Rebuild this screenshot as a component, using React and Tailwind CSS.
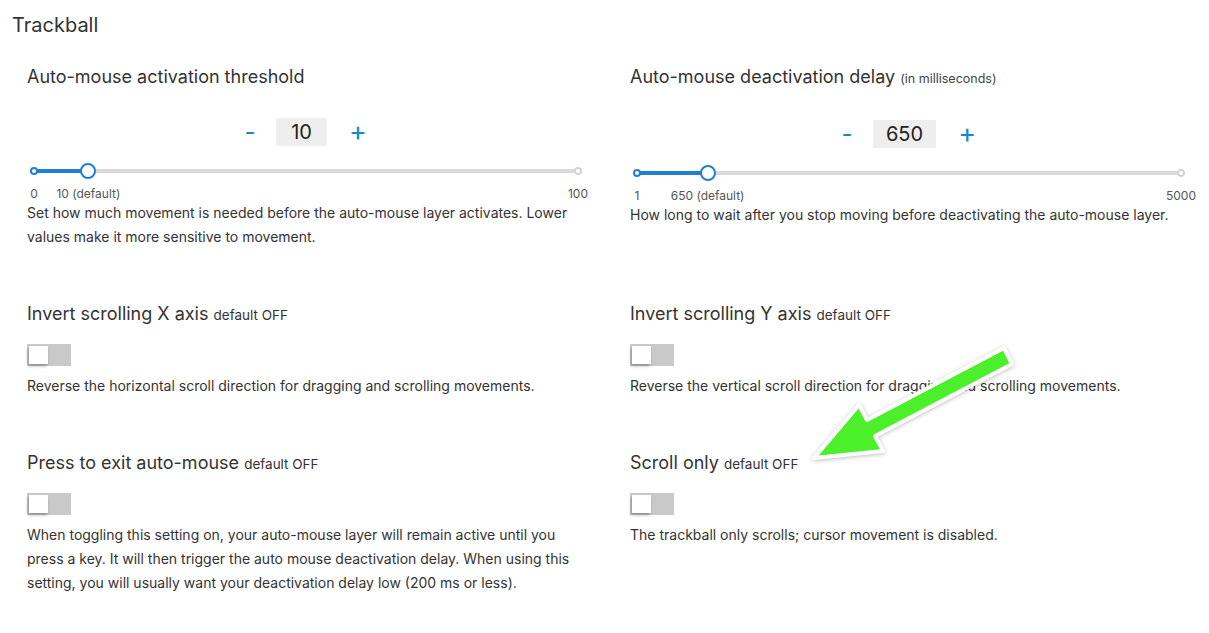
import React from 'react';

const font = { fontFamily: 'Inter, "Noto Sans", sans-serif' };

// slider with marks placed by value
const Slider = ({ min, max, value, def }) => {
  const pct = ((value - min) / (max - min)) * 100;
  const defPct = ((def - min) / (max - min)) * 100;
  return (
    <div className="pl-[7px] pr-[10px]">
      <div className="relative h-4">
        <div className="absolute left-0 right-0 top-[6px] h-[4px] bg-[#d9d9d9]" />
        <div className="absolute left-0 top-[6px] h-[4px] bg-[#1f7fd6]" style={{ width: `${pct}%` }} />
        <div className="absolute left-[-4px] top-[4px] w-2 h-2 rounded-full bg-white border-2 border-[#1f7fd6]" />
        <div className="absolute right-[-4px] top-[4px] w-2 h-2 rounded-full bg-white border-2 border-[#d4d4d4]" />
        <div
          className="absolute top-0 w-4 h-4 -ml-2 rounded-full bg-white border-2 border-[#1f7fd6]"
          style={{ left: `${pct}%` }}
        />
      </div>
      <div className="relative h-[14px] mt-2 text-[12px] leading-[14px] text-[#555]">
        <span className="absolute left-0 -translate-x-1/2">{min}</span>
        <span className="absolute -translate-x-1/2 whitespace-nowrap" style={{ left: `${defPct}%` }}>
          {def} (default)
        </span>
        <span className="absolute right-0 translate-x-1/2">{max}</span>
      </div>
    </div>
  );
};

const Stepper = ({ value }) => (
  <div className="flex items-center justify-center pr-[4px]">
    <button className="text-[24px] leading-7 text-[#148bc8] w-3 mr-5">-</button>
    <div className="h-7 min-w-[51px] px-[13px] text-center bg-[#eeeeee] text-[20px] leading-7 text-[#222]">{value}</div>
    <button className="text-[27px] leading-7 text-[#148bc8] ml-[22px]">+</button>
  </div>
);

const Toggle = () => (
  <div className="relative w-[44px] h-[22px] bg-[#c9c9c9]">
    <div className="absolute left-[2px] top-[2px] w-[19px] h-[18px] bg-white shadow-[-1px_2px_3px_rgba(0,0,0,0.3)]" />
  </div>
);

const ToggleSetting = ({ title, desc }) => (
  <div>
    <h3 className="text-[18px] leading-7 text-[#333]">
      {title} <span className="text-[13.5px] text-[#333]">default OFF</span>
    </h3>
    <div className="mt-[15px]">
      <Toggle />
    </div>
    <p className="mt-2 text-[14px] leading-6 text-[#333]">{desc}</p>
  </div>
);

const App = () => {
  return (
    <div className="relative w-[1209px] h-[633px] bg-white overflow-hidden" style={font}>
      <h2 className="pl-3 pt-[11px] text-[20px] leading-7 text-[#333]">Trackball</h2>

      <div className="pl-[27px] mt-6 grid grid-cols-[561px_561px] gap-x-[42px] gap-y-[51px]">
        {/* activation threshold */}
        <div>
          <h3 className="text-[18px] leading-7 text-[#333]">Auto-mouse activation threshold</h3>
          <div className="mt-[27px]">
            <Stepper value="10" />
          </div>
          <div className="mt-[17px]">
            <Slider min={0} max={100} value={10} def={10} />
          </div>
          <p className="text-[14px] leading-6 text-[#333]">
            Set how much movement is needed before the auto-mouse layer activates. Lower values make it more sensitive to movement.
          </p>
        </div>

        {/* deactivation delay */}
        <div>
          <h3 className="text-[18px] leading-7 text-[#333]">
            Auto-mouse deactivation delay <span className="text-[12.5px] text-[#444]">(in milliseconds)</span>
          </h3>
          <div className="mt-[27px]">
            <Stepper value="650" />
          </div>
          <div className="mt-[17px]">
            <Slider min={1} max={5000} value={650} def={650} />
          </div>
          <p className="text-[14px] leading-6 text-[#333]">
            How long to wait after you stop moving before deactivating the auto-mouse layer.
          </p>
        </div>

        <ToggleSetting
          title="Invert scrolling X axis"
          desc="Reverse the horizontal scroll direction for dragging and scrolling movements."
        />
        <ToggleSetting
          title="Invert scrolling Y axis"
          desc="Reverse the vertical scroll direction for dragging and scrolling movements."
        />
        <ToggleSetting
          title="Press to exit auto-mouse"
          desc="When toggling this setting on, your auto-mouse layer will remain active until you press a key. It will then trigger the auto mouse deactivation delay. When using this setting, you will usually want your deactivation delay low (200 ms or less)."
        />
        <ToggleSetting
          title="Scroll only"
          desc="The trackball only scrolls; cursor movement is disabled."
        />
      </div>

      {/* annotation arrow */}
      <svg
        className="absolute left-0 top-0 pointer-events-none"
        width="1209"
        height="633"
        style={{ filter: 'drop-shadow(0 1px 2px rgba(0,0,0,0.25))' }}
      >
        <polygon
          points="1004,348 867,420 859,405 814,458 883,451 875,436 1012,364"
          fill="#4cf02a"
          stroke="#ffffff"
          strokeWidth="4"
          strokeLinejoin="round"
        />
      </svg>
    </div>
  );
};

export default App;
